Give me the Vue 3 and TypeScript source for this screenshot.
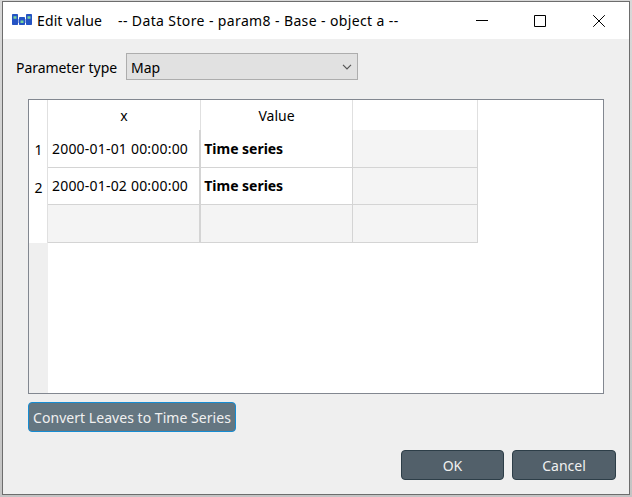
<script setup lang="ts">
interface Row {
  x: string
  value: string
}

const rows: Row[] = [
  { x: '2000-01-01 00:00:00', value: 'Time series' },
  { x: '2000-01-02 00:00:00', value: 'Time series' },
]
</script>

<template>
  <div class="desktop">
    <section class="window">
      <header class="titlebar">
        <svg class="logo" width="20" height="12" viewBox="0 0 20 12">
          <path d="M6 5h2v4H6zM12 5h2v4h-2z" fill="#9aafe4" />
          <rect x="0" y="0" width="6" height="11" rx=".7" fill="#2453c4" />
          <rect x="7" y="3" width="6" height="8" rx=".7" fill="#2453c4" />
          <rect x="14" y="0" width="6" height="11" rx=".7" fill="#2453c4" />
          <path d="M1.5 2.2h3v2.6h-3zM8.5 6.5h3v2.6h-3zM15.5 2.2h3v2.6h-3z" fill="#79d59c" />
        </svg>
        <h1 class="title"><span class="name">Edit value</span><span class="path">-- Data Store - param8 - Base - object a --</span></h1>
        <div class="controls">
          <svg width="12" height="12" viewBox="0 0 12 12"><path d="M0 5.5h12" /></svg>
          <svg class="maximize" width="12" height="12" viewBox="0 0 12 12"><path d="M.5.5h11v11H.5z" /></svg>
          <svg width="12" height="12" viewBox="0 0 12 12"><path d="M.2.2l11.6 11.6M11.8.2L.2 11.8" /></svg>
        </div>
      </header>
      <div class="type-row">
        <label class="type-label">Parameter type</label>
        <div class="combo">
          <span>Map</span>
          <svg width="10" height="6" viewBox="0 0 10 6"><path d="M1 .8l4 4 4-4" /></svg>
        </div>
      </div>
      <div class="table-view">
        <div class="grid">
          <div class="corner"></div>
          <div class="head"><span>x</span></div>
          <div class="head"><span>Value</span></div>
          <div class="head"></div>
          <template v-for="(row, i) in rows" :key="i">
            <div class="num">{{ i + 1 }}</div>
            <div class="cell thick" :class="{ raised: i > 0 }"><span class="date">{{ row.x }}</span></div>
            <div class="cell" :class="{ raised: i > 0 }"><span class="series">{{ row.value }}</span></div>
            <div class="cell empty"></div>
          </template>
          <div class="num"></div>
          <div class="cell empty thick"></div>
          <div class="cell empty"></div>
          <div class="cell empty"></div>
          <div class="gutter"></div>
        </div>
      </div>
      <button class="convert"><span>Convert Leaves to Time Series</span></button>
      <footer class="actions">
        <button class="action ok"><span>OK</span></button>
        <button class="action"><span>Cancel</span></button>
      </footer>
    </section>
  </div>
</template>

<style>
body {
  margin: 0;
  overflow: hidden;
}
</style>

<style scoped>
* {
  box-sizing: border-box;
}
.desktop {
  width: 632px;
  height: 497px;
  padding: 1px 2px 2px;
  background: linear-gradient(#d8d8d8, #c4c4c4);
  font: 14px/20px "Noto Sans", "Open Sans", sans-serif;
  color: #000;
  white-space: nowrap;
}
.window {
  display: flex;
  flex-direction: column;
  width: 628px;
  height: 494px;
  border: 1px solid #6d6d6d;
  background: #efefef;
}
.titlebar {
  display: flex;
  align-items: center;
  height: 37px;
  padding: 0 24px 0 9px;
  background: #fff;
}
.logo {
  flex: none;
  margin-top: -1px;
}
.title {
  display: flex;
  gap: 16px;
  margin: 1px 0 0 5px;
  font-size: 14px;
  font-weight: 400;
}
.name {
  letter-spacing: 0.12px;
}
.path {
  letter-spacing: 0.38px;
}
.controls {
  display: flex;
  gap: 47px;
  margin-left: auto;
}
.controls svg {
  display: block;
  fill: none;
  stroke: #000;
  stroke-width: 1;
}
.controls .maximize {
  margin-left: -1px;
}
.type-row {
  display: flex;
  align-items: center;
  height: 27px;
  margin: 14px 0 0 13px;
}
.type-label {
  width: 110px;
  padding-top: 2px;
  letter-spacing: -0.05px;
}
.combo {
  display: flex;
  align-items: center;
  justify-content: space-between;
  width: 232px;
  height: 27px;
  padding: 2px 5px 0 4px;
  border: 1px solid #adadad;
  background: #e1e1e1;
}
.combo svg {
  margin-top: -1px;
  fill: none;
  stroke: #555;
  stroke-width: 1.2;
}
.table-view {
  width: 576px;
  height: 295px;
  margin: 19px 0 0 25px;
  border: 1px solid #828790;
  background: #fff;
}
.grid {
  display: grid;
  grid-template-columns: 19px 153px 152px 125px;
  grid-template-rows: 30px 38px 37px 38px 150px;
}
.corner,
.head {
  border-right: 1px solid #e0e0e0;
}
.head {
  display: flex;
  justify-content: center;
  padding-top: 6px;
}
.num {
  padding: 10px 0 0 1px;
  border-right: 1px solid #e0e0e0;
  text-align: center;
}
.cell {
  padding: 9px 0 0 4px;
  border-right: 1px solid #d4d4d4;
  border-bottom: 1px solid #d4d4d4;
}
.cell.raised {
  padding-top: 8px;
}
.cell.thick {
  border-right-width: 2px;
}
.empty {
  background: #f4f4f4;
}
.date {
  letter-spacing: 0.2px;
}
.series {
  margin-left: -0.7px;
  font-weight: 700;
  letter-spacing: -0.03px;
}
.gutter {
  background: #efefef;
}
button {
  display: flex;
  align-items: center;
  justify-content: center;
  padding: 0;
  border-radius: 4px;
  font: inherit;
  color: #f0f0f0;
}
.convert {
  width: 208px;
  height: 30px;
  margin: 8px 0 0 25px;
  padding-top: 2px;
  border: 1px solid #168cd2;
  background: #647681;
  letter-spacing: 0.04px;
}
.actions {
  display: flex;
  justify-content: flex-end;
  gap: 8px;
  margin: 18px 13px 0 0;
}
.action {
  width: 104px;
  height: 30px;
  padding-top: 2px;
  border: 1px solid #2d3e48;
  background: #52606a;
}
.action.ok {
  width: 103px;
}
</style>
